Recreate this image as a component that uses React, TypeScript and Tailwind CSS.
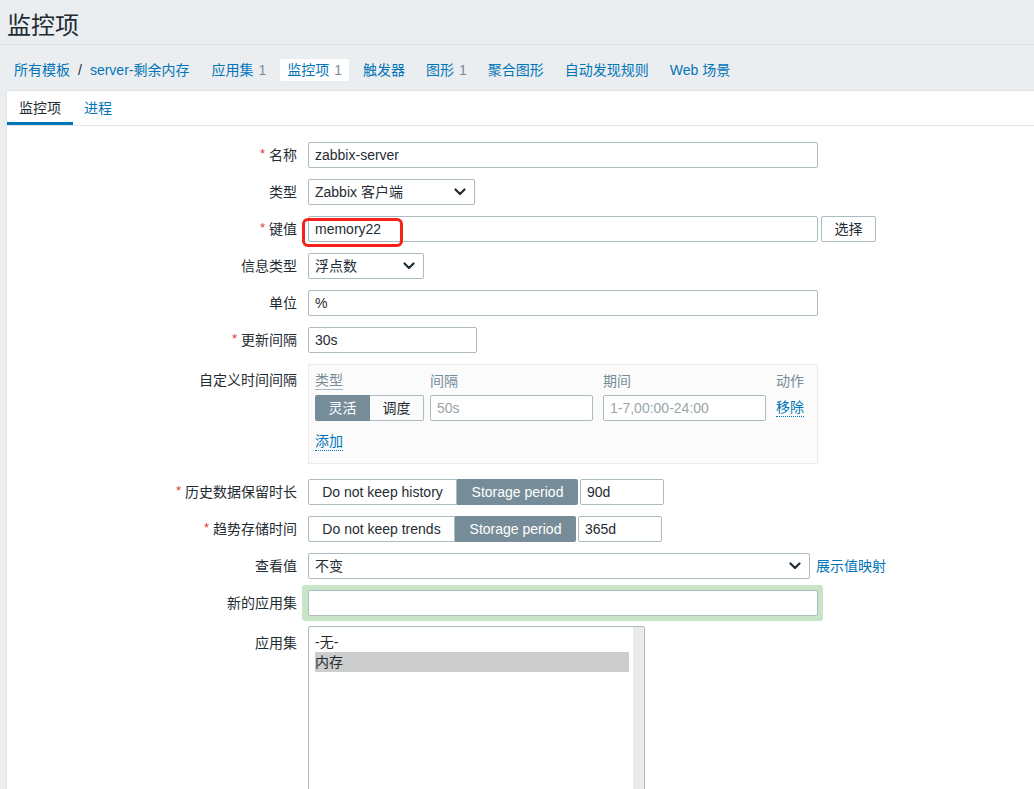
import React from 'react';

const font = { fontFamily: '"Liberation Sans", "Noto Sans CJK SC", sans-serif' };

const Chevron = () => (
  <svg width="12" height="8" viewBox="0 0 12 8" className="shrink-0">
    <path d="M1.5 1.5 6 6l4.5-4.5" fill="none" stroke="#1f2c33" strokeWidth="2.2" strokeLinecap="round" strokeLinejoin="round" />
  </svg>
);

const Label = ({ text, req, top }: { text: string; req?: boolean; top?: boolean }) => (
  <div className={`flex justify-end text-[14px] text-[#1f2c33] ${top ? 'pt-[6px] items-start' : 'h-[26px] items-center'}`}>
    {req && <span className="text-[#e33734] mr-[4px] text-[13px] leading-none relative top-[-2px]">*</span>}
    {text}
  </div>
);

const inputCls = 'h-[26px] border border-[#acbbc2] rounded-[2px] bg-white px-[6px] flex items-center text-[14px] text-[#1f2c33]';

const NavItem = ({ text, count, active }: { text: string; count?: string; active?: boolean }) => (
  <div className={`px-[7px] h-[22px] flex items-center rounded-[2px] ${active ? 'bg-white' : ''}`}>
    <span className="text-[#0275b8]">{text}</span>
    {count && <span className="text-[#768d99] ml-[5px]">{count}</span>}
  </div>
);

export default function App() {
  return (
    <div className="bg-[#ebeef0] min-h-[789px] w-[1034px] overflow-hidden" style={font}>
      {/* header */}
      <div className="h-[45px] border-b border-[#dce1e4] flex items-center px-[7px]">
        <h1 className="text-[24px] text-[#1f2c33] leading-none mt-[8px]">监控项</h1>
      </div>
      <div className="h-[45px] flex items-center text-[14px] pl-[7px] pt-[5px]">
        <div className="px-[7px] text-[#0275b8]">所有模板</div>
        <span className="text-[#1f2c33] px-[1px]">/</span>
        <div className="px-[7px] text-[#0275b8]">server-剩余内存</div>
        <div className="flex items-center gap-[7px] ml-[8px]">
          <NavItem text="应用集" count="1" />
          <NavItem text="监控项" count="1" active />
          <NavItem text="触发器" />
          <NavItem text="图形" count="1" />
          <NavItem text="聚合图形" />
          <NavItem text="自动发现规则" />
          <NavItem text="Web 场景" />
        </div>
      </div>

      {/* content */}
      <div className="ml-[6px] bg-white border-l border-t border-[#dfe4e7] pb-[40px]">
        <div className="flex border-b border-[#e2e6e8] text-[14px] h-[35px] items-end">
          <div className="px-[12px] pb-[3px] border-b-[3px] border-[#0275b8] text-[#1f2c33] h-[34px] flex items-end">监控项</div>
          <div className="px-[11px] pb-[6px] text-[#0275b8]">进程</div>
        </div>

        <div className="grid grid-cols-[290px_auto] gap-x-[11px] gap-y-[11px] pt-[16px]">
          <Label text="名称" req />
          <div className={`${inputCls} w-[510px]`}>zabbix-server</div>

          <Label text="类型" />
          <div className={`${inputCls} w-[167px] justify-between pr-[8px]`}>
            <span>Zabbix 客户端</span>
            <Chevron />
          </div>

          <Label text="键值" req />
          <div className="flex gap-[3px]">
            <div className="relative">
              <div className={`${inputCls} w-[510px]`}>memory22</div>
              <div className="absolute left-[-6px] top-[2px] w-[101px] h-[29px] border-[3px] border-[#f5211a] rounded-[6px]" />
            </div>
            <div className={`${inputCls} w-[55px] justify-center px-0`}>选择</div>
          </div>

          <Label text="信息类型" />
          <div className={`${inputCls} w-[116px] justify-between pr-[8px] border-[#1d5e91]`}>
            <span>浮点数</span>
            <Chevron />
          </div>

          <Label text="单位" />
          <div className={`${inputCls} w-[510px]`}>%</div>

          <Label text="更新间隔" req />
          <div className={`${inputCls} w-[169px]`}>30s</div>

          <Label text="自定义时间间隔" top />
          <div className="w-[510px] h-[100px] mb-[4px] border border-[#e9ecee] bg-[#fbfbfb] pl-[6px] pt-[7px] text-[14px]">
            <div className="grid grid-cols-[115px_173px_173px_auto]">
              <div className="text-[#768d99] h-[18px] flex">
                <span className="border-b border-[#aab7be] leading-[17px]">类型</span>
              </div>
              <div className="text-[#768d99] leading-[18px]">间隔</div>
              <div className="text-[#768d99] leading-[18px]">期间</div>
              <div className="text-[#768d99] leading-[18px]">动作</div>
              <div className="flex mt-[5px] h-[26px]">
                <div className="w-[55px] bg-[#768d99] text-white flex items-center justify-center rounded-l-[2px]">灵活</div>
                <div className="w-[54px] border border-l-0 border-[#acbbc2] rounded-r-[2px] flex items-center justify-center text-[#1f2c33]">调度</div>
              </div>
              <div className={`${inputCls} mt-[5px] text-[#9aa5aa] w-[163px]`}>50s</div>
              <div className={`${inputCls} mt-[5px] text-[#9aa5aa] w-[163px]`}>1-7,00:00-24:00</div>
              <div className="mt-[5px] h-[26px] flex items-center">
                <span className="text-[#0275b8] border-b border-dotted border-[#0275b8] leading-[17px]">移除</span>
              </div>
            </div>
            <div className="mt-[12px] flex">
              <span className="text-[#0275b8] border-b border-dotted border-[#0275b8] leading-[17px]">添加</span>
            </div>
          </div>

          <Label text="历史数据保留时长" req />
          <div className="flex gap-[2px]">
            <div className="flex h-[26px] text-[14px]">
              <div className="w-[149px] border border-[#acbbc2] rounded-l-[2px] flex items-center justify-center text-[#1f2c33]">Do not keep history</div>
              <div className="w-[121px] bg-[#768d99] text-white flex items-center justify-center rounded-r-[2px]">Storage period</div>
            </div>
            <div className={`${inputCls} w-[84px]`}>90d</div>
          </div>

          <Label text="趋势存储时间" req />
          <div className="flex gap-[2px]">
            <div className="flex h-[26px] text-[14px]">
              <div className="w-[147px] border border-[#acbbc2] rounded-l-[2px] flex items-center justify-center text-[#1f2c33]">Do not keep trends</div>
              <div className="w-[121px] bg-[#768d99] text-white flex items-center justify-center rounded-r-[2px]">Storage period</div>
            </div>
            <div className={`${inputCls} w-[84px]`}>365d</div>
          </div>

          <Label text="查看值" />
          <div className="flex items-center gap-[6px]">
            <div className={`${inputCls} w-[502px] justify-between pr-[8px]`}>
              <span>不变</span>
              <Chevron />
            </div>
            <span className="text-[14px] text-[#0275b8]">展示值映射</span>
          </div>

          <Label text="新的应用集" />
          <div className="bg-[#c8e5c8] rounded-[3px] p-[5px] pl-[6px] -m-[5px] -ml-[6px] w-[521px]">
            <div className={`${inputCls} w-[510px]`} />
          </div>

          <Label text="应用集" top />
          <div className="w-[337px] h-[190px] border border-[#acbbc2] rounded-[2px] flex text-[14px] text-[#1f2c33] -mt-[1px]">
            <div className="flex-1 pt-[5px] pl-[6px] pr-[4px]">
              <div className="h-[20px] flex items-center">-无-</div>
              <div className="h-[20px] flex items-center bg-[#cdcdcd]">内存</div>
            </div>
            <div className="w-[11px] bg-[#ebebeb]" />
          </div>
        </div>
      </div>
    </div>
  );
}
